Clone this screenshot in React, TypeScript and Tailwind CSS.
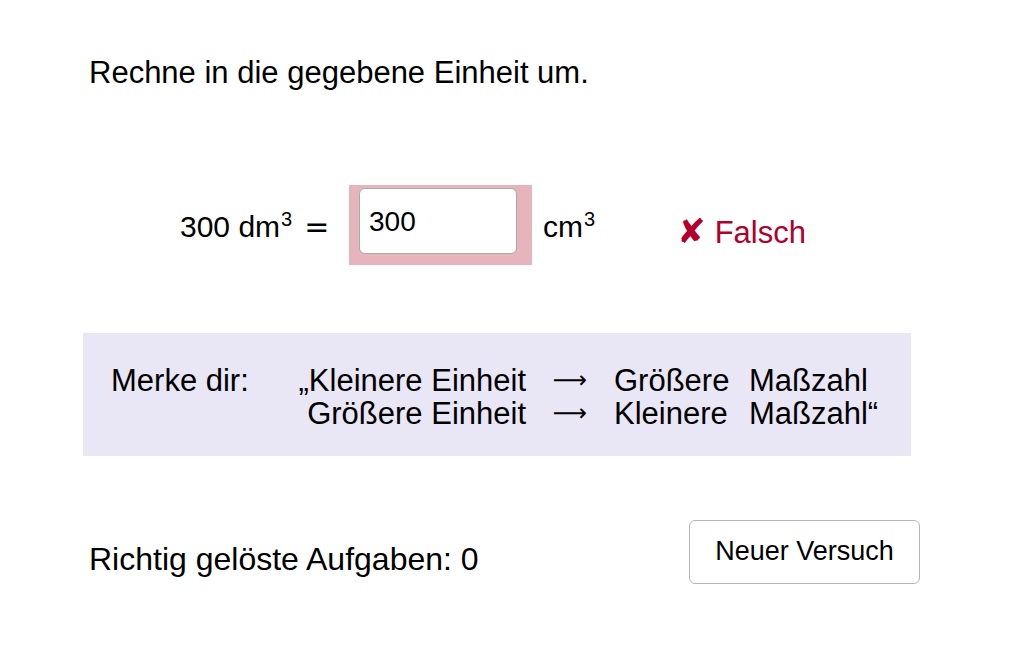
import { useState } from "react";

export default function App() {
  const [value, setValue] = useState("300");
  const [solved] = useState(0);

  return (
    <div className="w-[1032px] h-[645px] bg-white text-black font-['Liberation_Sans',Arial,sans-serif] overflow-hidden">
      <h1 className="pt-[55px] pl-[89px] text-[31px] leading-[36px] font-normal">
        Rechne in die gegebene Einheit um.
      </h1>

      {/* Aufgabe */}
      <div className="mt-[94px] pl-[180px] flex items-center">
        <span className="w-[157px] text-[30px] leading-[36px] pt-[7px] whitespace-nowrap flex items-baseline">
          <span>300 dm</span>
          <span className="text-[20px] relative -top-[11px] ml-[1px]">3</span>
          <span className="ml-[12px] font-['DejaVu_Sans',sans-serif]">=</span>
        </span>
        <div className="ml-[12px] w-[183px] h-[80px] bg-[#e6b4bd] pl-[10px] pt-[3px]">
          <input
            value={value}
            onChange={(e) => setValue(e.target.value)}
            className="w-[158px] h-[66px] rounded-[6px] border border-[#a9a9a9] bg-white px-[9px] pt-[2px] text-[28px] text-black outline-none font-['Liberation_Sans',Arial,sans-serif]"
          />
        </div>
        <span className="ml-[11px] text-[30px] leading-[36px] pt-[7px] whitespace-nowrap flex items-baseline">
          <span>cm</span>
          <span className="text-[20px] relative -top-[11px] ml-[1px]">3</span>
        </span>
        <span className="ml-[82px] text-[31px] leading-[36px] pt-[14px] text-[#b0002b] whitespace-nowrap flex items-baseline">
          <span className="font-['DejaVu_Sans',sans-serif] text-[34px] leading-[36px] mr-[9px]">✘</span>
          <span>Falsch</span>
        </span>
      </div>

      {/* Merksatz */}
      <div className="mt-[68px] ml-[83px] w-[828px] h-[123px] bg-[#e9e6f6] pl-[28px] pt-[31px]">
        <div className="grid grid-cols-[176px_239px_88px_135px_auto] text-[31px] leading-[33px] whitespace-nowrap">
          <span>Merke dir:</span>
          <span className="text-right">„Kleinere Einheit</span>
          <span className="text-center font-['DejaVu_Sans',sans-serif] text-[24px]">⟶</span>
          <span>Größere</span>
          <span>Maßzahl</span>
          <span />
          <span className="text-right">Größere Einheit</span>
          <span className="text-center font-['DejaVu_Sans',sans-serif] text-[24px]">⟶</span>
          <span>Kleinere</span>
          <span>Maßzahl“</span>
        </div>
      </div>

      {/* Fußzeile */}
      <div className="mt-[64px] ml-[89px] w-[831px] flex justify-between items-start">
        <span className="mt-[21px] text-[32px] leading-[36px]">
          Richtig gelöste Aufgaben: {solved}
        </span>
        <button
          onClick={() => setValue("")}
          className="w-[231px] h-[64px] rounded-[6px] border border-[#b5b5b5] bg-white text-[27px] leading-[32px] pb-[2px] font-['Liberation_Sans',Arial,sans-serif]"
        >
          Neuer Versuch
        </button>
      </div>
    </div>
  );
}
